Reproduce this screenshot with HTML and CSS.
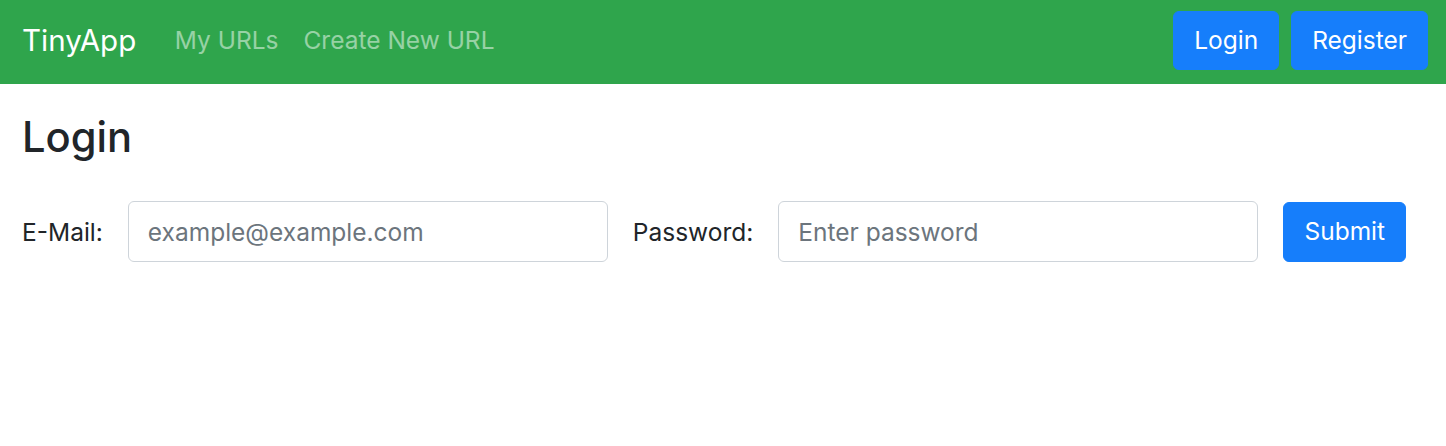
FILE: index.html
```html
<!DOCTYPE html>
<html lang="en">
<head>
<meta charset="utf-8">
<title>TinyApp - Login</title>
<link rel="stylesheet" href="styles.css">
</head>
<body>
<nav class="navbar">
  <a class="brand" href="#">TinyApp</a>
  <div class="nav-links">
    <a class="nav-link" href="#">My URLs</a>
    <a class="nav-link" href="#">Create New URL</a>
  </div>
  <div class="nav-actions">
    <button class="btn">Login</button>
    <button class="btn">Register</button>
  </div>
</nav>
<main class="content">
  <h2 class="title">Login</h2>
  <form class="form-row">
    <label class="label" for="email">E-Mail:</label>
    <input class="input" id="email" type="text" placeholder="example@example.com">
    <label class="label" for="password">Password:</label>
    <input class="input" id="password" type="password" placeholder="Enter password">
    <button class="btn btn-submit" type="button">Submit</button>
  </form>
</main>
</body>
</html>
```
FILE: styles.css
```css
* { box-sizing: border-box; }
body {
  margin: 0;
  font-family: "Inter", "Liberation Sans", sans-serif;
  font-size: 24.5px;
  color: #212529;
  background: #fff;
}
.navbar {
  height: 84px;
  background: #2fa54c;
  display: flex;
  align-items: center;
  padding: 0 18px 4px 22px;
}
.brand {
  color: #fff;
  text-decoration: none;
  font-size: 29.5px;
  margin-right: 26px;
}
.nav-links {
  display: flex;
  flex: 1;
}
.nav-link {
  color: rgba(255, 255, 255, 0.5);
  text-decoration: none;
  padding: 0 12.5px;
  font-size: 24.5px;
}
.nav-actions {
  display: flex;
  gap: 12px;
}
.btn {
  font-family: inherit;
  font-size: 24.5px;
  color: #fff;
  background: #167efb;
  border: 1px solid #167efb;
  border-radius: 6px;
  height: 59px;
  padding: 0 20px;
  line-height: 1;
}
.content {
  padding: 0 22px;
}
.title {
  font-size: 41.7px;
  font-weight: 500;
  line-height: 1.2;
  margin: 28px 0 39px;
}
.form-row {
  display: flex;
  align-items: center;
  gap: 25px;
}
.label {
  font-size: 24.5px;
}
.input {
  width: 480px;
  height: 61px;
  border: 1px solid #ced4da;
  border-radius: 6px;
  padding: 0 19px;
  font-family: inherit;
  font-size: 24.5px;
  color: #495057;
}
.input::placeholder { color: #6c757d; }
.btn-submit {
  width: 123px;
  height: 60px;
  padding: 0;
}
```
